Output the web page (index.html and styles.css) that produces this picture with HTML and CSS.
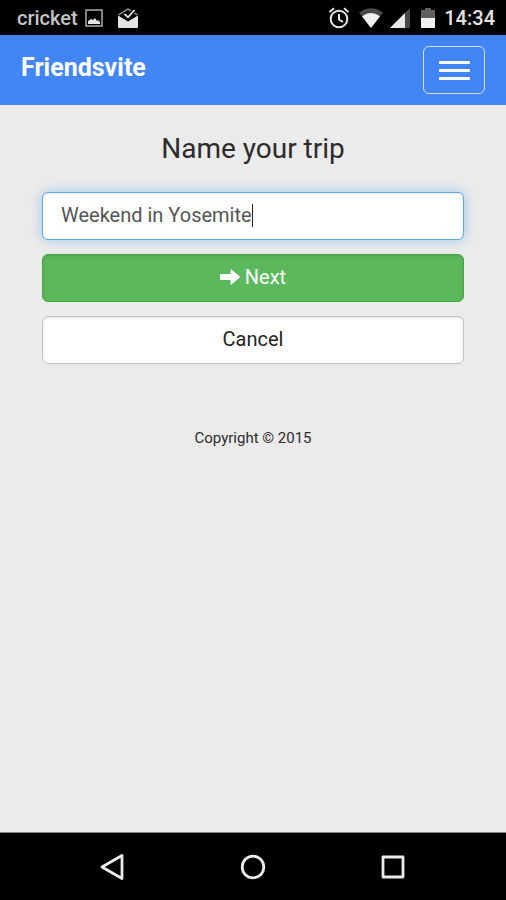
FILE: index.html
```html
<!DOCTYPE html>
<html lang="en">
<head>
<meta charset="utf-8">
<meta name="viewport" content="width=device-width, initial-scale=1">
<title>Friendsvite</title>
<link rel="stylesheet" href="styles.css">
</head>
<body>
<div class="status-bar">
  <span class="carrier">cricket</span>
  <svg class="icon-photo" width="18" height="18" viewBox="0 0 18 18" aria-hidden="true">
    <rect x="1" y="1" width="16" height="16" fill="none" stroke="#b8b8b8" stroke-width="1.4"/>
    <path d="M3 15v-3l3-2 2 1 2-2 2 3 1-1 2 2v2z" fill="#e4e4e4"/>
  </svg>
  <svg class="icon-mail" width="22" height="22" viewBox="0 0 22 22" aria-hidden="true">
    <path d="M1 8.500L11 14.500l10-6V20q0 1-1 1H2q-1 0-1-1z" fill="#e4e4e4"/>
    <path d="M1.500 8L11 2l9.500 6" fill="none" stroke="#a8a8a8" stroke-width="1.200"/>
    <path d="M8 7l3 3 6.500-7" fill="none" stroke="#000" stroke-width="4"/>
    <path d="M7.500 7l3.500 3.300L17.500 3" fill="none" stroke="#e4e4e4" stroke-width="1.800"/>
  </svg>
  <div class="status-icons">
    <svg width="22" height="22" viewBox="0 0 22 22" fill="none" stroke="#e4e4e4" stroke-width="2" aria-hidden="true">
      <circle cx="11" cy="12" r="8.300"/>
      <path d="M11 7v5.500l4 2.500M1.500 5l4.500-3.700M20.500 5L16 1.300"/>
    </svg>
    <svg width="24" height="20" viewBox="0 0 24 20" aria-hidden="true">
      <path d="M0 4.500Q12-4 24 4.500L12 20z" fill="#484848"/>
      <path d="M3 8.200Q12 2 21 8.200L12 20z" fill="#f0f0f0"/>
    </svg>
    <svg class="icon-signal" width="20" height="20" viewBox="0 0 20 20" aria-hidden="true">
      <path d="M20 0v20H0z" fill="#484848"/>
      <path d="M15 5v15H0z" fill="#e8e8e8"/>
    </svg>
    <svg width="14" height="20" viewBox="0 0 14 20" aria-hidden="true">
      <path d="M4 0h6v2h3q1 0 1 1v7H0V3q0-1 1-1h3z" fill="#606060"/>
      <path d="M0 10h14v9q0 1-1 1H1q-1 0-1-1z" fill="#f2f2f2"/>
    </svg>
    <time class="clock">14:34</time>
  </div>
</div>

<header class="navbar">
  <a class="brand" href="#">Friendsvite</a>
  <button class="menu-toggle" type="button" aria-label="Toggle navigation">
    <span class="bar"></span>
    <span class="bar"></span>
    <span class="bar"></span>
  </button>
</header>

<main class="content">
  <form class="trip-form">
    <h1 class="title"><label for="trip">Name your trip</label></h1>
    <div class="control field">
      <input class="field-input" id="trip" type="text" value="Weekend in Yosemite">
      <span class="caret"></span>
    </div>
    <button class="control button-next" type="submit">
      <svg width="20" height="16" viewBox="0 0 20 16" aria-hidden="true">
        <path d="M1 5h9.500V1q0-1 1-.4l8 6.700q.6.700 0 1.400l-8 6.700q-1 .6-1-.4v-4H1q-1 0-1-1V6q0-1 1-1z" fill="#fff"/>
      </svg>
      Next
    </button>
    <button class="control button-cancel" type="button">Cancel</button>
  </form>
  <footer class="copyright">Copyright © 2015</footer>
</main>

<nav class="system-nav" aria-label="System">
  <button class="system-button" type="button" aria-label="Back">
    <svg width="28" height="28" viewBox="0 0 28 28" fill="none" stroke="#ececec" stroke-width="2.800" stroke-linejoin="round" aria-hidden="true"><path d="M3 14l20-11.500v23z"/></svg>
  </button>
  <button class="system-button" type="button" aria-label="Home">
    <svg width="28" height="28" viewBox="0 0 28 28" fill="none" stroke="#ececec" stroke-width="2.800" aria-hidden="true"><circle cx="14" cy="14" r="10.800"/></svg>
  </button>
  <button class="system-button" type="button" aria-label="Recent apps">
    <svg width="28" height="28" viewBox="0 0 28 28" fill="none" stroke="#ececec" stroke-width="2.800" stroke-linejoin="round" aria-hidden="true"><rect x="4" y="4" width="20" height="20"/></svg>
  </button>
</nav>
</body>
</html>
```

FILE: styles.css
```css
* {
  box-sizing: border-box;
}

body {
  margin: 0;
  min-height: 100vh;
  display: flex;
  flex-direction: column;
  background: #ebebeb;
  color: #2b2b2b;
  font-family: Roboto, "Liberation Sans", sans-serif;
  font-size: 20px;
  line-height: 24px;
}

svg {
  display: block;
  flex: none;
}

button,
input {
  font: inherit;
}

.status-bar {
  display: flex;
  align-items: center;
  height: 35px;
  padding: 0 11px 0 17px;
  background: #000;
  color: #e4e4e4;
  font-weight: 500;
}

.carrier {
  color: #c4c4c4;
}

.icon-photo {
  margin-left: 7px;
}

.icon-mail {
  margin-left: 14px;
}

.icon-signal {
  margin: 0 2px 0 -2px;
}

.status-icons {
  display: flex;
  align-items: center;
  gap: 9px;
  margin-left: auto;
}

.navbar {
  display: flex;
  align-items: center;
  justify-content: space-between;
  height: 70px;
  padding: 0 21px;
  background: #4285f4;
}

.brand {
  padding-bottom: 4px;
  color: #fff;
  font-size: 25px;
  font-weight: 700;
  line-height: 32px;
  text-decoration: none;
}

.menu-toggle {
  display: flex;
  flex-direction: column;
  align-items: center;
  justify-content: center;
  gap: 5px;
  width: 62px;
  height: 48px;
  padding: 0;
  border: 1px solid #ddd;
  border-radius: 6px;
  background: transparent;
}

.bar {
  width: 31px;
  height: 3px;
  border-radius: 1px;
  background: #fff;
}

.content {
  flex: 1;
  padding: 24px 42px;
  text-align: center;
}

.trip-form {
  display: flex;
  flex-direction: column;
  gap: 14px;
}

.title {
  margin: 0 0 10px;
  font-size: 28px;
  font-weight: 400;
  line-height: 39px;
}

.control {
  display: flex;
  align-items: center;
  width: 100%;
  height: 48px;
  padding: 0 18px 2px;
  border: 1px solid;
  border-radius: 6px;
  background: #fff;
}

.field {
  border-color: #5ba8e6;
  box-shadow: inset 0 1px 2px rgba(0, 0, 0, 0.08), 0 0 12px rgba(102, 175, 233, 0.6);
}

.field-input {
  field-sizing: content;
  min-width: 0;
  padding: 0;
  border: 0;
  outline: 0;
  background: transparent;
  color: #555;
}

.caret {
  width: 1px;
  height: 23px;
  background: #222;
}

.button-next,
.button-cancel {
  justify-content: center;
  gap: 5px;
  box-shadow: inset 0 1px 3px rgba(0, 0, 0, 0.12);
}

.button-next {
  border-color: #45a845;
  background: #5cb85c;
  color: #fff;
}

.button-cancel {
  border-color: #c4c4c4;
  color: #222;
}

.copyright {
  margin-top: 62px;
  font-size: 15px;
}

.system-nav {
  display: flex;
  align-items: center;
  justify-content: center;
  gap: 112px;
  height: 68px;
  border-top: 1px solid #888;
  background: #000;
}

.system-button {
  padding: 0;
  border: 0;
  background: transparent;
}
```
